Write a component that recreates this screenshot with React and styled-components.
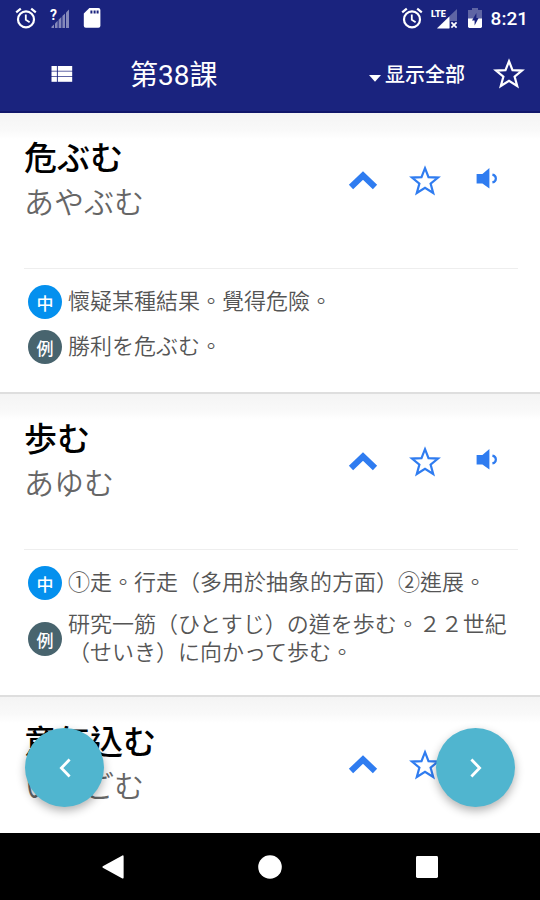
import styled, { createGlobalStyle } from "styled-components";

const words = [
  {
    word: "危ぶむ",
    kana: "あやぶむ",
    meaning: "懷疑某種結果。覺得危險。",
    example: "勝利を危ぶむ。",
  },
  {
    word: "歩む",
    kana: "あゆむ",
    meaning: "①走。行走（多用於抽象的方面）②進展。",
    example: "研究一筋（ひとすじ）の道を歩む。２２世紀（せいき）に向かって歩む。",
  },
  {
    word: "意気込む",
    kana: "いきごむ",
  },
];

const STAR =
  "M15 2.2 L18.5 11.2 L28 11.6 L20.6 17.6 L23.2 27 L15 21.8 L6.8 27 L9.4 17.6 L2 11.6 L11.5 11.2 Z";

function StarIcon() {
  return (
    <svg width="30" height="30" viewBox="0 0 30 30" fill="none">
      <path d={STAR} stroke="currentColor" strokeWidth="2.2" />
    </svg>
  );
}

function AlarmIcon() {
  return (
    <svg width="22" height="22" viewBox="0 0 22 22" fill="none">
      <g stroke="currentColor" strokeWidth="2.2">
        <circle cx="11" cy="12.4" r="8" />
        <path d="M1.2 5.4 L5.8 1.6 M20.8 5.4 L16.2 1.6" />
        <path d="M10.8 7.4 V12.8 L14.6 15.2" strokeWidth="1.8" />
      </g>
    </svg>
  );
}

function UnknownSignalIcon() {
  return (
    <svg width="20" height="22" viewBox="0 0 20 22">
      <g fill="#8589ba">
        <path d="M1.5 21 V19.8 L4 17.4 V21 Z" />
        <path d="M5 21 V16.4 L7.6 13.8 V21 Z" />
        <path d="M8.6 21 V12.8 L11.4 10 V21 Z" />
        <path d="M12.4 21 V9 L15 6.4 V21 Z" />
        <path d="M16 21 V5.4 L19 2.4 V21 Z" />
      </g>
      <text x="0" y="13" fill="#fff" fontSize="14" fontWeight="700">
        ?
      </text>
    </svg>
  );
}

function SdCardIcon() {
  return (
    <svg width="18" height="22" viewBox="0 0 18 22">
      <path
        d="M6.4 1 H15.4 Q17.4 1 17.4 3 V18.8 Q17.4 20.8 15.4 20.8 H2.8 Q0.8 20.8 0.8 18.8 V6.6 Z"
        fill="#fff"
      />
      <path d="M7.4 3.4 h2 v3 h-2z M10.6 3.4 h2 v3 h-2z M13.6 3.4 h2 v3 h-2z" fill="#1a237e" />
    </svg>
  );
}

function LteIcon() {
  return (
    <svg width="28" height="22" viewBox="0 0 28 22">
      <path d="M26 2 V14 H19 V21 H6 Z" fill="#5f65a4" />
      <path d="M6 21.5 L18.4 9.5 V21.5 Z" fill="#fff" />
      <path d="M20.4 15.4 L25.6 20.6 M25.6 15.4 L20.4 20.6" stroke="#fff" strokeWidth="1.7" />
      <text x="0" y="10" fill="#fff" fontSize="9" fontWeight="900">
        LTE
      </text>
    </svg>
  );
}

function BatteryIcon() {
  return (
    <svg width="16" height="22" viewBox="0 0 16 22">
      <path d="M5 1 H11 V3 H15 V12 H1 V3 H5 Z" fill="#5f65a4" />
      <path d="M1 11.5 H15 V19.6 Q15 21 13.6 21 H2.4 Q1 21 1 19.6 Z" fill="#fff" />
      <path d="M9.4 6 L5 13.4 H7.6 V18.6 L11.6 11 H9.4 Z" fill="#1a237e" />
    </svg>
  );
}

function ListIcon() {
  return (
    <svg width="22" height="18" viewBox="0 0 22 18" fill="#fff">
      <rect x="0.5" y="1" width="5.4" height="4.8" />
      <rect x="0.5" y="6.5" width="5.4" height="4.8" />
      <rect x="0.5" y="12" width="5.4" height="4.8" />
      <rect x="6.8" y="1" width="14.4" height="4.8" />
      <rect x="6.8" y="6.5" width="14.4" height="4.8" />
      <rect x="6.8" y="12" width="14.4" height="4.8" />
    </svg>
  );
}

function CollapseIcon() {
  return (
    <svg width="30" height="24" viewBox="0 0 30 24" fill="none">
      <path d="M3 18 L15 6.6 L27 18" stroke="currentColor" strokeWidth="6.2" />
    </svg>
  );
}

function VolumeIcon() {
  return (
    <svg width="24" height="26" viewBox="0 0 24 26">
      <path d="M1.6 6 H7.4 L14.4 0 V20.6 L7.4 15.6 H1.6 Z" fill="currentColor" />
      <path
        d="M17.4 6.6 C22 7.4 22 13.6 17.4 14.4"
        fill="none"
        stroke="currentColor"
        strokeWidth="2.2"
      />
    </svg>
  );
}

function ArrowIcon({ d }) {
  return (
    <svg width="20" height="24" viewBox="0 0 20 24" fill="none">
      <path d={d} stroke="#fff" strokeWidth="2.8" />
    </svg>
  );
}

function WordCard({ item }) {
  return (
    <Card>
      <CardHeader>
        <Names>
          <Word>{item.word}</Word>
          <Kana>{item.kana}</Kana>
        </Names>
        <IconButton aria-label="Collapse">
          <CollapseIcon />
        </IconButton>
        <IconButton aria-label="Favorite">
          <StarIcon />
        </IconButton>
        <IconButton aria-label="Play">
          <VolumeIcon />
        </IconButton>
      </CardHeader>
      {item.meaning && (
        <Details>
          <DetailRow>
            <Badge $color="#0490ee">中</Badge>
            <DetailText>{item.meaning}</DetailText>
          </DetailRow>
          <DetailRow>
            <Badge $color="#48646e">例</Badge>
            <DetailText>{item.example}</DetailText>
          </DetailRow>
        </Details>
      )}
    </Card>
  );
}

export default function App() {
  return (
    <Screen>
      <GlobalStyle />
      <StatusBar>
        <StatusGroup $gap="13px">
          <AlarmIcon />
          <UnknownSignalIcon />
          <SdCardIcon />
        </StatusGroup>
        <StatusGroup $gap="8px">
          <AlarmIcon />
          <LteIcon />
          <BatteryIcon />
          <Clock>8:21</Clock>
        </StatusGroup>
      </StatusBar>
      <Toolbar>
        <ToolbarButton aria-label="Lessons">
          <ListIcon />
        </ToolbarButton>
        <Title>第38課</Title>
        <ShowAllButton>
          <svg width="12" height="17" viewBox="0 0 12 17">
            <path d="M0 10 H12 L6 16.8 Z" fill="#fff" />
          </svg>
          显示全部
        </ShowAllButton>
        <ToolbarButton aria-label="Favorites">
          <StarIcon />
        </ToolbarButton>
      </Toolbar>
      <Content>
        <WordList>
          {words.map((item) => (
            <WordCard key={item.word} item={item} />
          ))}
        </WordList>
        <FloatingButton $side="left" aria-label="Previous lesson">
          <ArrowIcon d="M14.6 3.6 L6.4 12 L14.6 20.4" />
        </FloatingButton>
        <FloatingButton $side="right" aria-label="Next lesson">
          <ArrowIcon d="M5.4 3.6 L13.6 12 L5.4 20.4" />
        </FloatingButton>
      </Content>
      <NavBar>
        <NavButton aria-label="Back">
          <svg width="24" height="26" viewBox="0 0 24 26" fill="#fff">
            <path d="M21.4 1.4 Q22.6 1 22.6 2.4 V23.6 Q22.6 25 21.4 24.4 L1.8 13.8 Q0.8 13 1.8 12.2 Z" />
          </svg>
        </NavButton>
        <NavButton aria-label="Home">
          <svg width="24" height="24" viewBox="0 0 24 24" fill="#fff">
            <circle cx="12" cy="12" r="11.8" />
          </svg>
        </NavButton>
        <NavButton aria-label="Recent apps">
          <svg width="22" height="22" viewBox="0 0 22 22" fill="#fff">
            <rect width="22" height="22" rx="1.4" />
          </svg>
        </NavButton>
      </NavBar>
    </Screen>
  );
}

const GlobalStyle = createGlobalStyle`
  * {
    box-sizing: border-box;
  }

  body {
    margin: 0;
    font-family: Roboto, "Noto Sans CJK TC", sans-serif;
  }

  button {
    padding: 0;
    border: none;
    background: none;
    font: inherit;
    color: inherit;
    cursor: pointer;
  }

  svg {
    display: block;
    flex-shrink: 0;
    overflow: visible;
  }
`;

const Screen = styled.div`
  display: flex;
  flex-direction: column;
  height: 100vh;
  background: #fff;
`;

const StatusBar = styled.div`
  display: flex;
  justify-content: space-between;
  align-items: center;
  height: 36px;
  padding: 0 12px 0 15px;
  background: #1a237e;
  color: #fff;
`;

const StatusGroup = styled.div`
  display: flex;
  align-items: center;
  gap: ${(props) => props.$gap};
`;

const Clock = styled.span`
  font-size: 19px;
  font-weight: 500;
`;

const Toolbar = styled.header`
  display: flex;
  align-items: center;
  height: 77px;
  padding-left: 31px;
  border-bottom: 2px solid #10166a;
  background: #1a237e;
  color: #fff;
`;

const ToolbarButton = styled.button`
  display: flex;
  align-items: center;
  justify-content: center;
  width: 62px;
  height: 62px;
`;

const Title = styled.h1`
  flex: 1;
  margin: 0;
  padding: 0 0 2px 37px;
  font-size: 28px;
  font-weight: 400;
`;

const ShowAllButton = styled.button`
  display: flex;
  align-items: center;
  gap: 4px;
  height: 62px;
  margin-right: 13px;
  font-family: Roboto, "Noto Sans CJK SC", sans-serif;
  font-size: 20px;
  font-weight: 500;
`;

const Content = styled.main`
  position: relative;
  flex: 1;
  min-height: 0;
`;

const WordList = styled.div`
  height: 100%;
  overflow-y: auto;
  scrollbar-width: none;
`;

const Card = styled.article`
  border-bottom: 2px solid #dedede;
  background: linear-gradient(#f4f4f4, #f9f9f9 17px, #fff 26px);
`;

const CardHeader = styled.div`
  display: flex;
  align-items: center;
  padding: 24px 22px 43px 24px;
`;

const Names = styled.div`
  flex: 1;
`;

const Word = styled.h2`
  margin: 0;
  font-size: 33px;
  font-weight: 500;
  line-height: 44px;
  color: #000;
`;

const Kana = styled.p`
  margin: 0;
  font-size: 30px;
  font-weight: 350;
  line-height: 44px;
  color: #666;
`;

const IconButton = styled.button`
  display: flex;
  align-items: center;
  justify-content: center;
  width: 62px;
  height: 62px;
  color: #2f7cf0;
`;

const Details = styled.div`
  display: flex;
  flex-direction: column;
  gap: 11px;
  margin: 0 22px 0 24px;
  padding: 16px 0 28px 4px;
  border-top: 1px solid #eee;
`;

const DetailRow = styled.div`
  display: flex;
  align-items: center;
  gap: 6px;
`;

const Badge = styled.span`
  display: flex;
  flex-shrink: 0;
  align-items: center;
  justify-content: center;
  width: 34px;
  height: 34px;
  border-radius: 50%;
  background: ${(props) => props.$color};
  color: #fff;
  font-size: 17px;
  font-weight: 500;
`;

const DetailText = styled.p`
  margin: 0;
  font-size: 22px;
  font-weight: 350;
  line-height: 28px;
  color: #555;
`;

const FloatingButton = styled.button`
  position: absolute;
  bottom: 26px;
  ${(props) => props.$side}: 25px;
  display: flex;
  align-items: center;
  justify-content: center;
  width: 79px;
  height: 79px;
  border-radius: 50%;
  && {
    background: #50b5cf;
  }
  box-shadow: 0 4px 10px rgba(0, 0, 0, 0.3);
`;

const NavBar = styled.nav`
  display: flex;
  align-items: center;
  justify-content: center;
  height: 67px;
  background: #000;
`;

const NavButton = styled.button`
  display: flex;
  align-items: center;
  justify-content: center;
  width: 157px;
  height: 67px;
`;
